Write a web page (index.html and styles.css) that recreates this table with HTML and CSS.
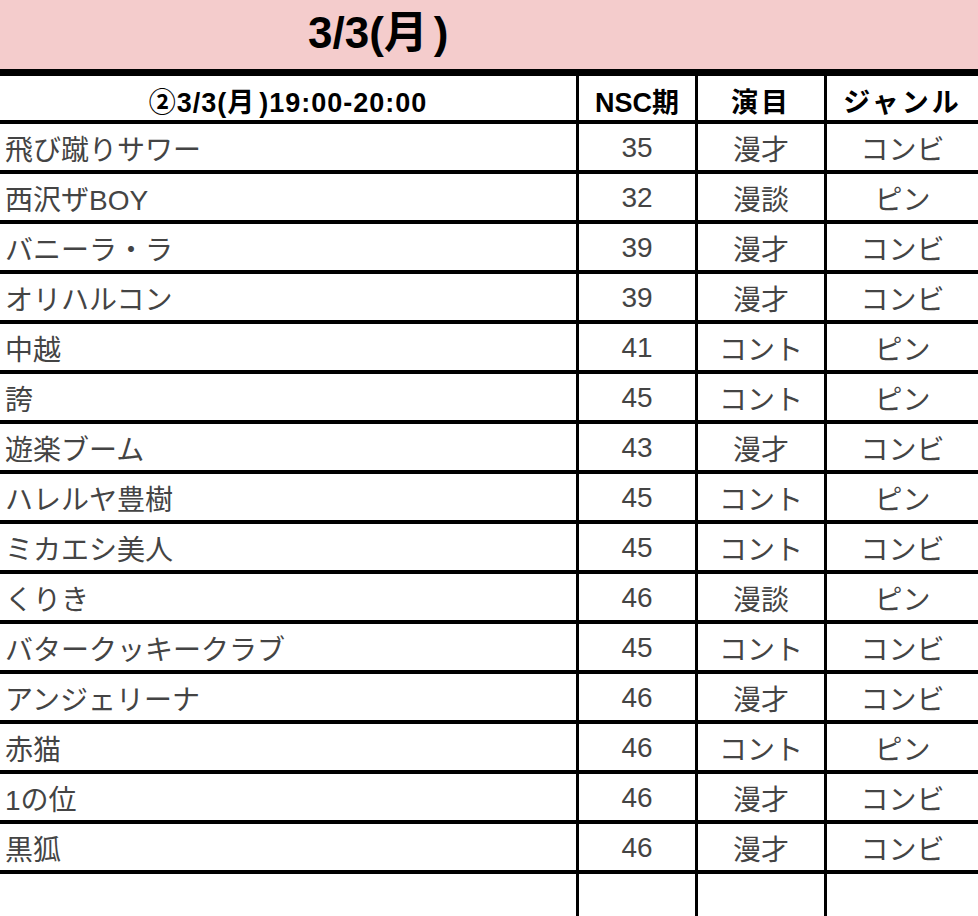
FILE: index.html
```html
<!DOCTYPE html>
<html lang="ja">
<head>
<meta charset="utf-8">
<title>3/3(月)</title>
<link rel="stylesheet" href="styles.css">
</head>
<body>
<div class="title-bar"><h1 class="title">3/3(月<span class="paren">)</span></h1></div>
<table class="lineup">
  <colgroup>
    <col class="c-name"><col class="c-nsc"><col class="c-act"><col class="c-genre">
  </colgroup>
  <thead>
    <tr>
      <th class="h-slot">②3/3(月<span class="paren-sm">)</span>19:00-20:00</th>
      <th>NSC期</th>
      <th class="h-wide">演目</th>
      <th class="h-wide">ジャンル</th>
    </tr>
  </thead>
  <tbody>
    <tr><td class="name">飛び蹴りサワー</td><td>35</td><td>漫才</td><td>コンビ</td></tr>
    <tr><td class="name">西沢ザBOY</td><td>32</td><td>漫談</td><td>ピン</td></tr>
    <tr><td class="name">バニーラ・ラ</td><td>39</td><td>漫才</td><td>コンビ</td></tr>
    <tr><td class="name">オリハルコン</td><td>39</td><td>漫才</td><td>コンビ</td></tr>
    <tr><td class="name">中越</td><td>41</td><td>コント</td><td>ピン</td></tr>
    <tr><td class="name">誇</td><td>45</td><td>コント</td><td>ピン</td></tr>
    <tr><td class="name">遊楽ブーム</td><td>43</td><td>漫才</td><td>コンビ</td></tr>
    <tr><td class="name">ハレルヤ豊樹</td><td>45</td><td>コント</td><td>ピン</td></tr>
    <tr><td class="name">ミカエシ美人</td><td>45</td><td>コント</td><td>コンビ</td></tr>
    <tr><td class="name">くりき</td><td>46</td><td>漫談</td><td>ピン</td></tr>
    <tr><td class="name">バタークッキークラブ</td><td>45</td><td>コント</td><td>コンビ</td></tr>
    <tr><td class="name">アンジェリーナ</td><td>46</td><td>漫才</td><td>コンビ</td></tr>
    <tr><td class="name">赤猫</td><td>46</td><td>コント</td><td>ピン</td></tr>
    <tr><td class="name">1の位</td><td>46</td><td>漫才</td><td>コンビ</td></tr>
    <tr><td class="name">黒狐</td><td>46</td><td>漫才</td><td>コンビ</td></tr>
    <tr class="empty"><td class="name"></td><td></td><td></td><td></td></tr>
  </tbody>
</table>
</body>
</html>
```
FILE: styles.css
```css
html, body {
  margin: 0;
  padding: 0;
  background: #ffffff;
  overflow: hidden;
}
body {
  width: 978px;
  height: 916px;
  font-family: "Liberation Sans", Arial, "Noto Sans CJK JP", sans-serif;
}
.title-bar {
  height: 69px;
  background: #f4cccc;
  border-bottom: 7px solid #000;
  padding-left: 308px;
}
.title {
  margin: 0;
  font-size: 44px;
  font-weight: bold;
  line-height: 66px;
  color: #000;
}
.title .paren {
  margin-left: 6px;
}
.paren-sm {
  margin-left: 4px;
}
.lineup {
  border-collapse: separate;
  border-spacing: 0;
  table-layout: fixed;
  width: 978px;
}
.c-name { width: 576px; }
.c-nsc { width: 119px; }
.c-act { width: 129px; }
.c-genre { width: 154px; }
.lineup th, .lineup td {
  box-sizing: border-box;
  padding: 0;
  border-bottom: 4px solid #000;
  border-left: 3px solid #000;
  text-align: center;
  vertical-align: middle;
  white-space: nowrap;
  overflow: hidden;
}
.lineup th:first-child, .lineup td:first-child {
  border-left: none;
}
.lineup th {
  height: 48px;
  padding-top: 4px;
  font-size: 27px;
  font-weight: bold;
  color: #000;
}
.lineup th.h-slot {
  letter-spacing: 1px;
}
.lineup th.h-wide {
  letter-spacing: 3px;
}
.lineup td {
  height: 50px;
  padding-top: 2px;
  font-size: 28px;
  color: #444444;
}
.lineup td.name {
  text-align: left;
  padding-left: 5px;
}
.lineup tr.empty td {
  border-bottom: none;
}
```
